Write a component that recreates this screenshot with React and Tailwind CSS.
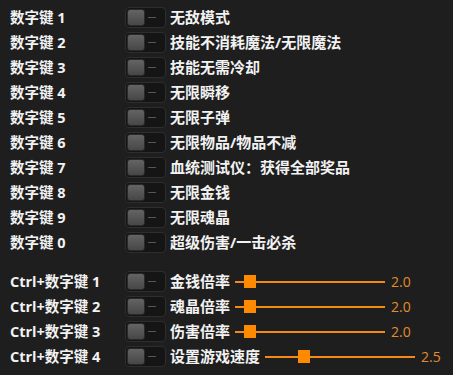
const KEYS = [
  ['数字键 1', '无敌模式'],
  ['数字键 2', '技能不消耗魔法/无限魔法'],
  ['数字键 3', '技能无需冷却'],
  ['数字键 4', '无限瞬移'],
  ['数字键 5', '无限子弹'],
  ['数字键 6', '无限物品/物品不减'],
  ['数字键 7', '血统测试仪：获得全部奖品'],
  ['数字键 8', '无限金钱'],
  ['数字键 9', '无限魂晶'],
  ['数字键 0', '超级伤害/一击必杀'],
]

const CTRL = [
  { key: 'Ctrl+数字键 1', label: '金钱倍率', value: '2.0', knob: 9 },
  { key: 'Ctrl+数字键 2', label: '魂晶倍率', value: '2.0', knob: 9 },
  { key: 'Ctrl+数字键 3', label: '伤害倍率', value: '2.0', knob: 9 },
  { key: 'Ctrl+数字键 4', label: '设置游戏速度', value: '2.5', knob: 33 },
]

function Toggle() {
  return (
    <div className="relative w-[41px] h-[21px] rounded-[4px] bg-[#151515] border border-[#2e2e2e] shrink-0">
      <div className="absolute left-[1px] top-[1px] w-[18px] h-[17px] rounded-[3px] border border-[#2a2a2a] bg-gradient-to-b from-[#646464] to-[#474747]" />
      <div className="absolute left-[22px] top-[9px] w-[8px] h-[1px] bg-[#555555]" />
    </div>
  )
}

function Slider({ knob }) {
  return (
    <div className="relative w-[150px] h-[14px] ml-[5px] shrink-0">
      <div className="absolute left-0 right-0 top-[6px] h-[2px] bg-[#f38a17]" />
      <div className="absolute top-0 w-[12px] h-[13px] bg-[#ff8a00]" style={{ left: knob }} />
    </div>
  )
}

export default function App() {
  return (
    <div
      className="w-[453px] h-[375px] bg-[#1e1e1e] text-[#f2f2f2] pt-[5px] overflow-hidden"
      style={{ fontFamily: '"Open Sans", "Noto Sans CJK SC", sans-serif' }}
    >
      {KEYS.map(([k, d]) => (
        <div key={k} className="flex items-center h-[25px]">
          <div className="w-[125px] pl-[10px] text-[14.5px] font-bold">{k}</div>
          <Toggle />
          <div className="ml-[4px] text-[15px] font-bold whitespace-nowrap">{d}</div>
        </div>
      ))}
      <div className="mt-[14px]">
        {CTRL.map(r => (
          <div key={r.key} className="flex items-center h-[25px]">
            <div className="w-[125px] pl-[10px] text-[14.5px] font-bold whitespace-nowrap">{r.key}</div>
            <Toggle />
            <div className="ml-[4px] text-[15px] font-bold whitespace-nowrap">{r.label}</div>
            <Slider knob={r.knob} />
            <div className="ml-[6px] text-[14px] text-[#e38b2c]">{r.value}</div>
          </div>
        ))}
      </div>
    </div>
  )
}
